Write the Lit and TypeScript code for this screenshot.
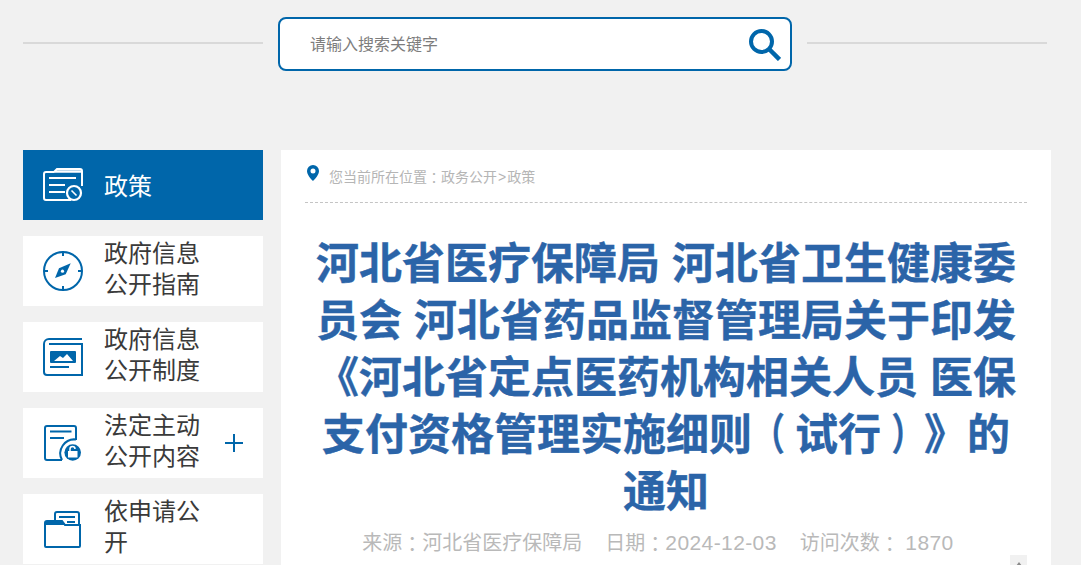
import { LitElement, html, css } from "lit";
import { customElement } from "lit/decorators.js";

const ic = {
  policy: html`<svg viewBox="0 0 40 34" width="40" height="34" fill="none" stroke="#fff" stroke-width="2"><path d="M28 32H3a2 2 0 0 1-2-2V6a2 2 0 0 1 2-2h8l3-3h23a2 2 0 0 1 2 2v15"/><path d="M12 3.500h26" stroke-width="2.500"/><path d="M6 10h27M6 17h16M6 24h16"/><circle cx="31" cy="25" r="7" stroke-width="2.200"/><path d="M28.500 22.500l5 5" stroke-width="1.600"/></svg>`,
  compass: html`<svg viewBox="0 0 40 40" width="40" height="40" fill="none" stroke="#0066aa" stroke-width="2"><circle cx="20" cy="20" r="19"/><path d="M20 1v4M20 35v4M1 20h4M35 20h4"/><path d="M27.700 12.300L22.700 23.300 12 27 16 17.300z" stroke="none" fill="#0066aa"/><circle cx="19.500" cy="20.200" r="1.600" fill="#fff" stroke="none"/></svg>`,
  book: html`<svg viewBox="0 0 40 38" width="40" height="38" fill="none" stroke="#0066aa" stroke-width="2"><path d="M39 1H6a5 5 0 0 0-5 5v28a3 3 0 0 0 3 3h35V6H6"/><rect x="7" y="13" width="26" height="12" rx="1" fill="#0066aa" stroke="none"/><path d="M11 23l6-5 3 2 4-4 6 7z" fill="#fff" stroke="none"/><path d="M7 29h19"/></svg>`,
  doc: html`<svg viewBox="0 0 40 37" width="40" height="37" fill="none" stroke="#0066aa" stroke-width="2"><path d="M19 35H4a2 2 0 0 1-2-2V3a2 2 0 0 1 2-2h27a2 2 0 0 1 2 2v12"/><path d="M19 35a14 14 0 0 1 14-20.500"/><path d="M7 6.500h21.500M7 13h14"/><circle cx="29.700" cy="27.500" r="8.300" fill="#0066aa" stroke="none"/><rect x="25" y="26" width="9.500" height="6.500" fill="#fff" stroke="none"/><path d="M27 26v-2a2.500 2.500 0 0 1 5 0" stroke="#fff" stroke-width="1.500"/></svg>`,
  folder: html`<svg viewBox="0 0 40 37" width="40" height="37" fill="none" stroke="#0066aa" stroke-width="2"><path d="M12 9V3a2 2 0 0 1 2-2h20a2 2 0 0 1 2 2v10"/><path d="M16 6h16M24 11h8"/><path d="M2 12a2 2 0 0 1 2-2h15l3 4h15v21a1 1 0 0 1-1 1H3a1 1 0 0 1-1-1z"/><path d="M2 10h17l3 4H2z" fill="#0066aa" stroke="none"/></svg>`,
};

const p = (s: string) => html`<span class="p">${s}</span>`;

@customElement("app-root")
export class AppRoot extends LitElement {
  static styles = css`
    :host {
      display: block;
      height: 565px;
      overflow: hidden;
      background: #f1f1f1;
      font-family: "Liberation Sans", "Noto Sans CJK SC", sans-serif;
      color: #3a3a3a;
      text-spacing-trim: space-all;
      font-kerning: none;
    }
    .p { font-family: "Noto Sans CJK TC", sans-serif; line-height: 1; }
    .top {
      display: grid;
      grid-template-columns: 240px 514px 240px;
      column-gap: 15px;
      align-items: center;
      padding: 17px 0 0 23px;
    }
    .rule { height: 2px; background: #d9d9d9; margin-top: -2px; }
    .search {
      box-sizing: border-box;
      height: 54px;
      border: 2px solid #0066aa;
      border-radius: 8px;
      background: #fff;
      display: flex;
      align-items: center;
      justify-content: space-between;
      padding: 0 9px 0 30px;
      font-size: 16px;
      color: #7d7d7d;
    }
    .search span { padding-bottom: 2px; }
    .search svg { margin: 2px 0 0 0; }
    .main {
      display: grid;
      grid-template-columns: 240px 770px;
      column-gap: 18px;
      align-items: start;
      padding: 79px 0 0 23px;
    }
    .nav { display: flex; flex-direction: column; gap: 16px; }
    .item {
      height: 70px;
      background: #fff;
      display: grid;
      grid-template-columns: 81px 96px 1fr;
      align-items: center;
      font-size: 24px;
      line-height: 31px;
    }
    .item.active { background: #0066aa; color: #fff; }
    .label { padding-bottom: 4px; }
    .active .label { padding: 2px 0 0; }
    .icon { display: flex; padding-left: 20px; }
    .plus { position: relative; width: 18px; height: 18px; margin-left: 25px; }
    .plus::before, .plus::after { content: ""; position: absolute; background: #0066aa; }
    .plus::before { left: 0; right: 0; top: 8px; height: 2px; }
    .plus::after { top: 0; bottom: 0; left: 8px; width: 2px; }
    .content { background: #fff; padding: 0 24px; height: 500px; position: relative; }
    .crumb {
      height: 53px;
      box-sizing: border-box;
      border-bottom: 1px dashed #c4c4c4;
      display: flex;
      align-items: center;
      gap: 10px;
      padding: 0 0 0 2px;
      font-size: 14px;
      color: #b5b5b5;
    }
    .crumb svg { margin-top: -6px; }
    .crumb .p { display: inline-block; transform: translateY(1px); }
    .gt { margin: 0 1px; }
    h1 {
      margin: 33px 0 0;
      font-size: 43px;
      line-height: 57px;
      font-weight: 700;
      color: #2b64a8;
      text-align: center;
      -webkit-text-stroke: 0.4px #2b64a8;
    }
    h1 .ln { display: block; white-space: nowrap; }
    .lp, .rp { display: inline-block; width: 1em; line-height: 1; }
    .lp { transform: translateX(-5px) scaleX(0.75); }
    .rp { transform: translateX(5px) scaleX(0.75); }
    .meta {
      font-size: 20px;
      line-height: 28px;
      color: #b9b9b9;
      text-align: center;
      margin-top: 8px;
      padding-right: 16px;
      white-space: pre;
    }
    .meta .p { display: inline-block; transform: translateY(2px); }
    .num { font-size: 21px; letter-spacing: 0.4px; line-height: 1; }
    .meta .item-m + .item-m { margin-left: 23px; }
    .scroll {
      position: absolute;
      right: 24px;
      top: 405px;
      width: 17px;
      height: 17px;
      background: #f1f1f1;
      display: flex;
      justify-content: center;
      padding-top: 7px;
      box-sizing: border-box;
    }
    .scroll i {
      display: block;
      border: 3px solid transparent;
      border-bottom: 4px solid #8a8a8a;
      border-top: 0;
      width: 0;
      height: 0;
    }
  `;

  render() {
    const items = [
      [ic.compass, "政府信息公开指南", false],
      [ic.book, "政府信息公开制度", false],
      [ic.doc, "法定主动公开内容", true],
      [ic.folder, "依申请公开", false],
    ] as const;
    return html`
      <div class="top">
        <div class="rule"></div>
        <div class="search">
          <span>请输入搜索关键字</span>
          <svg width="32" height="32" viewBox="0 0 32 32" fill="none" stroke="#0066aa">
            <circle cx="12.500" cy="12.500" r="10.500" stroke-width="4"/>
            <path d="M20 20l10.500 10.500" stroke-width="4.500"/>
          </svg>
        </div>
        <div class="rule"></div>
      </div>
      <div class="main">
        <div class="nav">
          <div class="item active"><div class="icon">${ic.policy}</div><div class="label">政策</div></div>
          ${items.map(
            ([i, t, plus]) => html`<div class="item">
              <div class="icon">${i}</div>
              <div class="label">${t}</div>
              ${plus ? html`<div class="plus"></div>` : ""}
            </div>`
          )}
        </div>
        <div class="content">
          <div class="crumb">
            <svg width="12" height="16" viewBox="0 0 12 16"><path fill-rule="evenodd" fill="#0066aa" d="M6 0a6 6 0 0 1 6 6c0 3.500-3.500 7.500-6 10C3.500 13.500 0 9.500 0 6a6 6 0 0 1 6-6zm0 3.500a2.500 2.500 0 1 0 0 5 2.500 2.500 0 0 0 0-5z"/></svg>
            <span>您当前所在位置${p("：")}政务公开<span class="gt">&gt;</span>政策</span>
          </div>
          <h1><span class="ln">河北省医疗保障局 河北省卫生健康委</span><span class="ln">员会 河北省药品监督管理局关于印发</span><span class="ln">《河北省定点医药机构相关人员 医保</span><span class="ln">支付资格管理实施细则<span class="p lp">（</span>试行<span class="p rp">）</span>》的</span><span class="ln">通知</span></h1>
          <div class="meta"><span class="item-m">来源${p("：")}河北省医疗保障局</span><span class="item-m">日期${p("：")}<span class="num">2024-12-03</span></span><span class="item-m">访问次数${p("：")} <span class="num">1870</span></span></div>
          <div class="scroll"><i></i></div>
        </div>
      </div>
    `;
  }
}
